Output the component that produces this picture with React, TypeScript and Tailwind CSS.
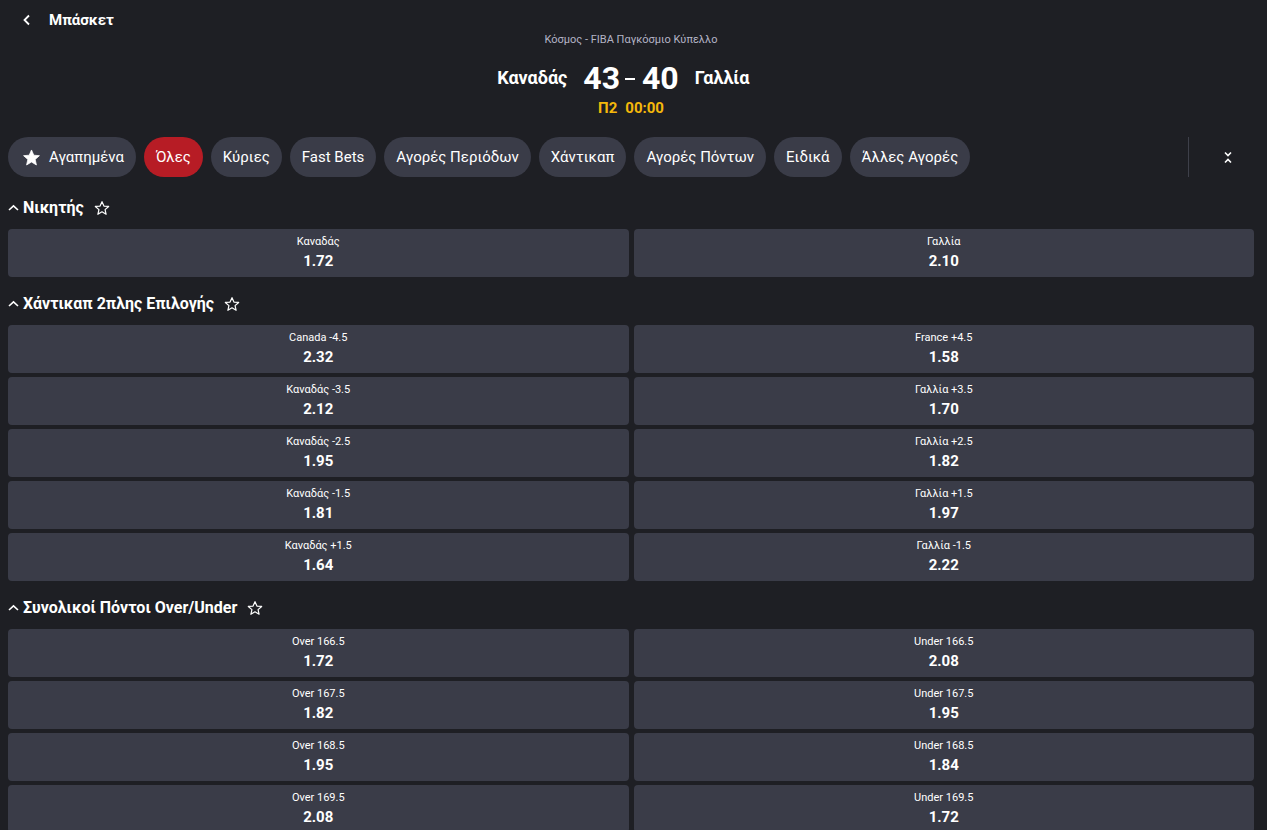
import React from 'react'

type Pick = { label: string; odds: string }
type Market = { title: string; rows: [Pick, Pick][] }

const markets: Market[] = [
  {
    title: 'Νικητής',
    rows: [[{ label: 'Καναδάς', odds: '1.72' }, { label: 'Γαλλία', odds: '2.10' }]],
  },
  {
    title: 'Χάντικαπ 2πλης Επιλογής',
    rows: [
      [{ label: 'Canada -4.5', odds: '2.32' }, { label: 'France +4.5', odds: '1.58' }],
      [{ label: 'Καναδάς -3.5', odds: '2.12' }, { label: 'Γαλλία +3.5', odds: '1.70' }],
      [{ label: 'Καναδάς -2.5', odds: '1.95' }, { label: 'Γαλλία +2.5', odds: '1.82' }],
      [{ label: 'Καναδάς -1.5', odds: '1.81' }, { label: 'Γαλλία +1.5', odds: '1.97' }],
      [{ label: 'Καναδάς +1.5', odds: '1.64' }, { label: 'Γαλλία -1.5', odds: '2.22' }],
    ],
  },
  {
    title: 'Συνολικοί Πόντοι Over/Under',
    rows: [
      [{ label: 'Over 166.5', odds: '1.72' }, { label: 'Under 166.5', odds: '2.08' }],
      [{ label: 'Over 167.5', odds: '1.82' }, { label: 'Under 167.5', odds: '1.95' }],
      [{ label: 'Over 168.5', odds: '1.95' }, { label: 'Under 168.5', odds: '1.84' }],
      [{ label: 'Over 169.5', odds: '2.08' }, { label: 'Under 169.5', odds: '1.72' }],
    ],
  },
]

const tabs = ['Όλες', 'Κύριες', 'Fast Bets', 'Αγορές Περιόδων', 'Χάντικαπ', 'Αγορές Πόντων', 'Ειδικά', 'Άλλες Αγορές']

function Star({ filled = false, size = 16 }: { filled?: boolean; size?: number }) {
  return (
    <svg width={size} height={size} viewBox="0 0 24 24" fill={filled ? 'currentColor' : 'none'} stroke="currentColor" strokeWidth={filled ? 1 : 1.8} strokeLinejoin="round">
      <path d="M12 2.5l2.9 6.6 7.1.6-5.4 4.7 1.6 7-6.2-3.7-6.2 3.7 1.6-7L2 9.7l7.1-.6z" />
    </svg>
  )
}

function Caret() {
  return (
    <svg width="11" height="10" viewBox="0 0 11 10" fill="none" stroke="currentColor" strokeWidth="1.6">
      <polyline points="1,7 5.5,2.8 10,7" />
    </svg>
  )
}

function Odd({ pick }: { pick: Pick }) {
  return (
    <div className="flex h-12 flex-col items-center justify-center rounded-[4px] bg-[#3a3c48] pb-[2px] text-white">
      <span className="text-[11px] leading-[14px]">{pick.label}</span>
      <span className="mt-[3px] text-[15px] font-bold leading-[18px]">{pick.odds}</span>
    </div>
  )
}

export default function App() {
  return (
    <div className="min-h-[830px] bg-[#1e1f24] pl-2 pr-[13px] text-white" style={{ fontFamily: 'Roboto, "Noto Sans", sans-serif' }}>
      <div className="flex items-center pt-3">
        <svg className="ml-[14px]" width="10" height="12" viewBox="0 0 10 12" fill="none" stroke="currentColor" strokeWidth="1.8">
          <polyline points="7,1.5 2.5,6 7,10.5" />
        </svg>
        <span className="ml-[17px] text-[15px] font-bold leading-4">Μπάσκετ</span>
      </div>

      <div className="mt-1 text-center text-[11px] leading-4 text-[#b4b4c6]">Κόσμος - FIBA Παγκόσμιο Κύπελλο</div>
      <div className="mt-[10px] grid h-10 grid-cols-[1fr_auto_1fr] items-center font-bold leading-10">
        <div className="flex items-center justify-end">
          <span className="text-[18px]">Καναδάς</span>
          <span className="ml-4 text-[32px]">43</span>
        </div>
        <span className="ml-[5px] mr-[7px] mt-[2px] h-[2px] w-[10px] bg-white" />
        <div className="flex items-center">
          <span className="text-[32px]">40</span>
          <span className="ml-4 text-[18px]">Γαλλία</span>
        </div>
      </div>
      <div className="flex justify-center gap-2 text-[15px] font-bold leading-5 text-[#f5b80b]">
        <span>Π2</span>
        <span>00:00</span>
      </div>

      <div className="mt-[19px] flex items-center gap-2">
        <button className="flex h-10 items-center gap-[8px] rounded-full bg-[#3a3c48] pl-[14px] pr-3 text-[15px]">
          <Star filled size={19} />
          Αγαπημένα
        </button>
        {tabs.map((t, i) => (
          <button key={t} className={`h-10 rounded-full px-3 text-[15px] ${i === 0 ? 'bg-[#b71c25]' : 'bg-[#3a3c48]'}`}>
            {t}
          </button>
        ))}
        <div className="ml-auto h-10 w-px bg-[#3e404a]" />
        <svg className="ml-[27px] mr-[22px]" width="8" height="13" viewBox="0 0 8 13" fill="none" stroke="currentColor" strokeWidth="1.6">
          <polyline points="1,1.5 4,4.5 7,1.5" />
          <polyline points="1,11.5 4,8.5 7,11.5" />
        </svg>
      </div>

      <div className="mt-[4px]">
        {markets.map((m) => (
          <section key={m.title} className="pt-[15px]">
            <div className="flex h-6 items-center">
              <span><Caret /></span>
              <h2 className="ml-[4px] text-[16px] font-bold">{m.title}</h2>
              <span className="ml-[10px]"><Star size={16} /></span>
            </div>
            <div className="mt-[9px] grid grid-cols-2 gap-x-[5px] gap-y-1">
              {m.rows.map((r, i) => (
                <React.Fragment key={i}>
                  <Odd pick={r[0]} />
                  <Odd pick={r[1]} />
                </React.Fragment>
              ))}
            </div>
          </section>
        ))}
      </div>
    </div>
  )
}
